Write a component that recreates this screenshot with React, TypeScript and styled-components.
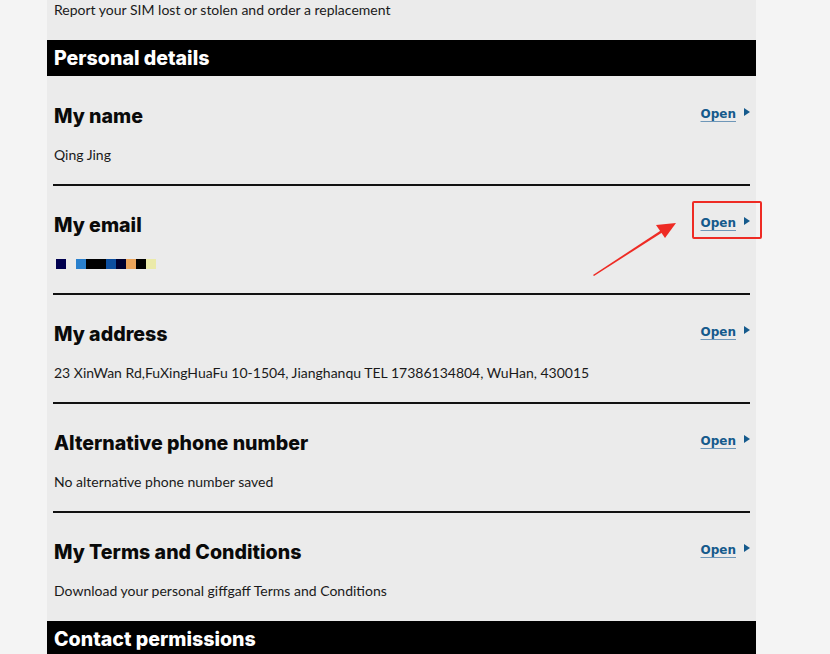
import React from "react";
import styled, { createGlobalStyle } from "styled-components";

const GlobalStyle = createGlobalStyle`
  html, body {
    margin: 0;
    padding: 0;
    background-color: #f4f4f4;
  }
  body {
    font-family: Lato, "Liberation Sans", sans-serif;
    color: #111;
  }
`;

type Detail = {
  id: string;
  title: string;
  text?: string;
  masked?: boolean;
};

const details: Detail[] = [
  { id: "name", title: "My name", text: "Qing Jing" },
  { id: "email", title: "My email", masked: true },
  {
    id: "address",
    title: "My address",
    text: "23 XinWan Rd,FuXingHuaFu 10-1504, Jianghanqu TEL 17386134804, WuHan, 430015",
  },
  {
    id: "phone",
    title: "Alternative phone number",
    text: "No alternative phone number saved",
  },
  {
    id: "terms",
    title: "My Terms and Conditions",
    text: "Download your personal giffgaff Terms and Conditions",
  },
];

const maskColors = [
  "#00004f",
  "transparent",
  "#2a80cd",
  "#000000",
  "#000000",
  "#0c4fa0",
  "#00002e",
  "#eca55b",
  "#000000",
  "#ebeaa9",
];

const Page = styled.div`
  position: relative;
  width: 830px;
  height: 654px;
  overflow: hidden;
  padding-left: 47px;
  box-sizing: border-box;
`;

const Column = styled.main`
  width: 709px;
  min-height: 654px;
  background-color: #ebebeb;
`;

const Tail = styled.p`
  margin: 0;
  padding: 0 7px 21px;
  font-size: 14px;
  line-height: 19px;
  color: #1a1a1a;
`;

const SectionBar = styled.h2`
  margin: 0;
  height: 36px;
  padding: 0 7px;
  display: flex;
  align-items: center;
  background-color: #000;
  color: #fff;
  font-family: Inter, Lato, sans-serif;
  font-size: 19.6px;
  font-weight: 800;
`;

const DetailRow = styled.section<{ $first?: boolean; $last?: boolean }>`
  margin: 0 6px;
  padding: ${(p) => (p.$first ? 26 : 25)}px 0 ${(p) => (p.$last ? 20 : 19)}px 1px;
  border-bottom: ${(p) => (p.$last ? "none" : "2px solid #111")};
`;

const RowHead = styled.div`
  display: flex;
  align-items: center;
  justify-content: space-between;
  height: 28px;
`;

const RowTitle = styled.h3`
  margin: 0;
  font-family: Inter, Lato, sans-serif;
  font-size: 19.6px;
  line-height: 28px;
  font-weight: 800;
  color: #0a0a0a;
`;

const OpenLink = styled.a`
  display: flex;
  align-items: center;
  gap: 8px;
  font-family: "DejaVu Sans", Verdana, sans-serif;
  font-size: 12px;
  font-weight: 700;
  color: #155a8c;
  text-decoration: underline;
  text-decoration-color: #6f97b8;
  text-underline-offset: 3px;
  cursor: pointer;
  transform: translateY(-2px);
`;

const Arrow = styled.span`
  width: 0;
  height: 0;
  border-top: 4.5px solid transparent;
  border-bottom: 4.5px solid transparent;
  border-left: 6px solid #155a8c;
  transform: translateY(-2px);
`;

const RowText = styled.p`
  margin: 15px 0 0;
  font-size: 14px;
  line-height: 20px;
  color: #1a1a1a;
`;

const Mask = styled.div`
  display: flex;
  margin: 15px 0 0 2px;
  height: 20px;
  align-items: center;
`;

const MaskCell = styled.span<{ $color: string }>`
  width: 10px;
  height: 10px;
  background-color: ${(p) => p.$color};
`;

const Callout = styled.div`
  position: absolute;
  left: 692px;
  top: 201px;
  width: 70px;
  height: 38px;
  box-sizing: border-box;
  border: 2px solid #ee2b24;
  border-radius: 2px;
`;

const Pointer = styled.svg`
  position: absolute;
  left: 585px;
  top: 215px;
`;

export default function App() {
  return (
    <Page>
      <GlobalStyle />
      <Column>
        <Tail>Report your SIM lost or stolen and order a replacement</Tail>
        <SectionBar>Personal details</SectionBar>
        {details.map((d, i) => (
          <DetailRow
            key={d.id}
            $first={i === 0}
            $last={i === details.length - 1}
          >
            <RowHead>
              <RowTitle>{d.title}</RowTitle>
              <OpenLink>
                Open
                <Arrow />
              </OpenLink>
            </RowHead>
            {d.masked ? (
              <Mask>
                {maskColors.map((c, j) => (
                  <MaskCell key={j} $color={c} />
                ))}
              </Mask>
            ) : (
              <RowText>{d.text}</RowText>
            )}
          </DetailRow>
        ))}
        <SectionBar>Contact permissions</SectionBar>
      </Column>
      <Callout />
      <Pointer width="100" height="70" viewBox="0 0 100 70">
        <polygon points="8,60 78,14 79.5,16 9,61" fill="#ee2b24" />
        <polygon points="91,8 71,10 80,23" fill="#ee2b24" />
      </Pointer>
    </Page>
  );
}
